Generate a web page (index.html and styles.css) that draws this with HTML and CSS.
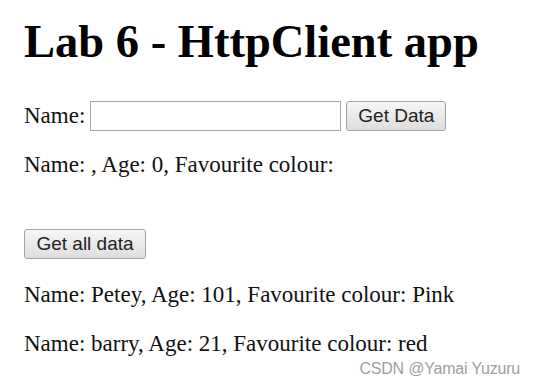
FILE: index.html
```html
<!DOCTYPE html>
<html lang="en">
<head>
  <meta charset="UTF-8">
  <title>Lab 6 - HttpClient app</title>
  <meta name="viewport" content="width=device-width, initial-scale=1.0">
  <link rel="stylesheet" href="styles.css">
</head>
<body>
  <h1>Lab 6 - HttpClient app</h1>

  <div class="search-row">
    <label for="name">Name:</label>
    <input type="text" id="name">
    <button class="btn">Get Data</button>
  </div>

  <p class="single">Name: , Age: 0, Favourite colour:</p>

  <button class="btn all-btn">Get all data</button>

  <p class="person">Name: Petey, Age: 101, Favourite colour: Pink</p>
  <p class="person">Name: barry, Age: 21, Favourite colour: red</p>

  <div class="watermark">CSDN @Yamai Yuzuru</div>
</body>
</html>
```

FILE: styles.css
```css
body {
  margin: 0;
  padding: 0 24px;
  background-color: #fff;
  color: #111;
  font-family: "Liberation Serif", "Times New Roman", serif;
  font-size: 23px;
}
h1 {
  margin: 16px 0 0;
  font-size: 46.5px;
  line-height: 52px;
  font-weight: bold;
  color: #000;
}
.search-row {
  display: flex;
  align-items: center;
  gap: 5px;
  margin-top: 33px;
  height: 30px;
}
.search-row input {
  width: 251px;
  height: 30px;
  box-sizing: border-box;
  border: 1px solid #a9a9a9;
  background: #fff;
  margin: 0;
  padding: 0 4px;
  font-size: 18px;
}
.btn {
  height: 30px;
  box-sizing: border-box;
  padding: 0 4px;
  margin: 0;
  border: 1px solid #a3a3a3;
  border-radius: 3px;
  background: linear-gradient(#f6f6f6, #dedede);
  color: #222;
  font-family: "Liberation Sans", Arial, sans-serif;
  font-size: 19px;
  white-space: nowrap;
}
.search-row .btn {
  width: 100px;
}
.single {
  margin: 21px 0 0;
  line-height: 26px;
}
.all-btn {
  display: block;
  width: 122px;
  margin-top: 51px;
}
.person {
  margin: 23px 0 0;
  line-height: 26px;
}
.watermark {
  position: absolute;
  right: 17px;
  bottom: 4px;
  color: #a0a0a0;
  font-family: "Liberation Sans", Arial, sans-serif;
  font-size: 16px;
  letter-spacing: -0.2px;
}
```
